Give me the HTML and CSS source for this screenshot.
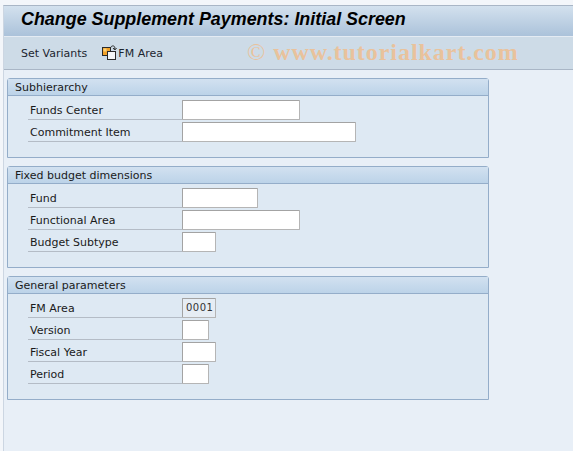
FILE: index.html
```html
<!DOCTYPE html>
<html lang="en">
<head>
    <meta charset="UTF-8">
    <meta name="viewport" content="width=device-width, initial-scale=1.0">
    <title>Change Supplement Payments: Initial Screen</title>
    <link rel="stylesheet" href="styles.css">
</head>
<body>
    <div class="screen">
        <div class="title-bar">
            <h1>Change Supplement Payments: Initial Screen</h1>
        </div>
        <div class="toolbar">
            <span class="tool-btn">Set Variants</span>
            <span class="tool-btn tool-icon">
                <svg width="16" height="16" viewBox="0 0 16 16">
                    <rect x="0.5" y="2.5" width="8" height="8" fill="#f2a127" stroke="#2a2a2a"/>
                    <rect x="1.5" y="3.5" width="3" height="3" fill="#fbd27a"/>
                    <rect x="5.5" y="6.5" width="8" height="8" fill="#f4f6f8" stroke="#2a2a2a"/>
                    <path d="M8.5 3 C9 0.6 12 0.2 12.8 2.2 L12.8 4.5" fill="none" stroke="#2a2a2a"/>
                    <path d="M11 3 L12.8 5 L14.6 3" fill="none" stroke="#2a2a2a"/>
                </svg>
                FM Area
            </span>
            <span class="watermark"><span class="copy">©</span> www.tutorialkart.com</span>
        </div>
        <div class="content">
            <section class="panel panel-two">
                <h2>Subhierarchy</h2>
                <div class="row"><label>Funds Center</label><span class="field w-118"></span></div>
                <div class="row"><label>Commitment Item</label><span class="field w-174"></span></div>
            </section>
            <section class="panel panel-three">
                <h2>Fixed budget dimensions</h2>
                <div class="row"><label>Fund</label><span class="field w-76"></span></div>
                <div class="row"><label>Functional Area</label><span class="field w-118"></span></div>
                <div class="row"><label>Budget Subtype</label><span class="field w-34"></span></div>
            </section>
            <section class="panel panel-four">
                <h2>General parameters</h2>
                <div class="row"><label>FM Area</label><span class="field w-34 filled">0001</span></div>
                <div class="row"><label>Version</label><span class="field w-27"></span></div>
                <div class="row"><label>Fiscal Year</label><span class="field w-34"></span></div>
                <div class="row"><label>Period</label><span class="field w-27"></span></div>
            </section>
        </div>
    </div>
</body>
</html>
```

FILE: styles.css
```css
* {
    margin: 0;
    padding: 0;
    box-sizing: border-box;
}

html, body {
    width: 573px;
    height: 451px;
    overflow: hidden;
}

body {
    font-family: "DejaVu Sans", sans-serif;
    font-size: 11px;
    color: #1a1a1a;
    background: #f3f6fa;
    padding-top: 5px;
    padding-left: 3px;
}

.screen {
    height: 446px;
    background: #e8eff7;
    border-left: 1px solid #ccd6e2;
    border-top: 1px solid #a9b6c6;
}

.title-bar {
    height: 31px;
    padding: 0 0 3px 17px;
    display: flex;
    align-items: center;
    background: linear-gradient(180deg, #d3e1ee 0%, #abc2da 100%);
    border-bottom: 1px solid #e4ebf3;
}

.title-bar h1 {
    font-family: "Liberation Sans", sans-serif;
    font-size: 17.9px;
    font-style: italic;
    font-weight: bold;
    color: #000;
}

.toolbar {
    position: relative;
    height: 33px;
    padding-left: 17px;
    display: flex;
    align-items: center;
    gap: 15px;
    background: #cddbe7;
    border-bottom: 1px solid #a9b6c6;
}

.tool-btn {
    display: flex;
    align-items: center;
    color: #1c2530;
}

.watermark {
    position: absolute;
    left: 243px;
    top: 2px;
    font-family: "Liberation Serif", serif;
    font-size: 24px;
    font-weight: bold;
    letter-spacing: 0.95px;
    color: #e9c29c;
    white-space: nowrap;
}

.copy {
    font-weight: normal;
}

.content {
    padding: 8px 0 0 3px;
    display: flex;
    flex-direction: column;
    gap: 8px;
}

.panel {
    width: 482px;
    background: #dee9f3;
    border: 1px solid #94adc9;
    border-radius: 3px 3px 0 0;
}

.panel-two {
    height: 80px;
}

.panel-three {
    height: 102px;
}

.panel-four {
    height: 124px;
}

.panel h2 {
    height: 17px;
    margin-bottom: 4px;
    padding-left: 7px;
    font-size: 11px;
    font-weight: normal;
    line-height: 17px;
    background: linear-gradient(180deg, #d2e1f0 0%, #bcd3e8 100%);
    border-bottom: 1px solid #94adc9;
}

.row {
    height: 22px;
    margin-left: 20px;
    display: flex;
}

.row label {
    width: 154px;
    height: 20px;
    padding: 4px 0 0 2px;
    border-bottom: 1px solid #b4bcc6;
}

.field {
    height: 20px;
    background: #fff;
    border: 1px solid #b5b5b5;
    border-top-color: #a3a3a3;
    border-left-color: #a3a3a3;
    border-radius: 1px;
}

.filled {
    background: #e6edf4;
    padding-left: 3px;
    line-height: 17px;
    letter-spacing: 0.5px;
    font-size: 10px;
    color: #333;
}

.w-27 { width: 27px; }
.w-34 { width: 34px; }
.w-76 { width: 76px; }
.w-118 { width: 118px; }
.w-174 { width: 174px; }
```
